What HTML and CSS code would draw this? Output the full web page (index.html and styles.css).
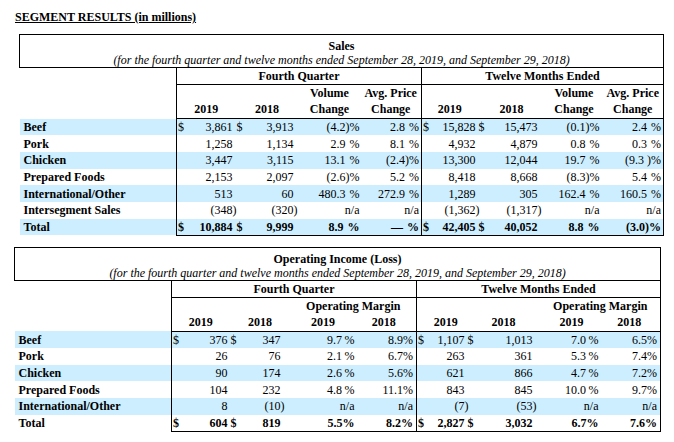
FILE: index.html
```
<!DOCTYPE html>
<html>
<head>
<meta charset="utf-8">
<link rel="stylesheet" href="styles.css">
</head>
<body>
<div class="page">
  <p class="heading">SEGMENT RESULTS (in millions)</p>

  <table class="seg sales">
    <colgroup>
      <col class="c-lab"><col class="c-d"><col class="c-a"><col class="c-d"><col class="c-b"><col class="c-c"><col class="c-e">
      <col class="c-d"><col class="c-f"><col class="c-d"><col class="c-g"><col class="c-h"><col class="c-i">
    </colgroup>
    <tr class="ttl">
      <td colspan="13"><div class="t">Sales</div><div class="sub">(for the fourth quarter and twelve months ended September 28, 2019, and September 29, 2018)</div></td>
    </tr>
    <tr class="grp">
      <td></td>
      <td colspan="6" class="fq">Fourth Quarter</td>
      <td colspan="6" class="tm">Twelve Months Ended</td>
    </tr>
    <tr class="hd">
      <td></td>
      <td colspan="2" class="fq">2019</td>
      <td colspan="2">2018</td>
      <td>Volume<br>Change</td>
      <td>Avg. Price<br>Change</td>
      <td colspan="2" class="tm">2019</td>
      <td colspan="2">2018</td>
      <td>Volume<br>Change</td>
      <td class="last">Avg. Price<br>Change</td>
    </tr>
    <tr class="d sh">
      <td>Beef</td><td>$</td><td>3,861</td><td>$</td><td>3,913</td><td>(4.2)%</td><td>2.8<i class="gp"></i>%</td>
      <td>$</td><td>15,828</td><td>$</td><td>15,473</td><td>(0.1)%</td><td>2.4<i class="gp"></i>%</td>
    </tr>
    <tr class="d">
      <td>Pork</td><td></td><td>1,258</td><td></td><td>1,134</td><td>2.9<i class="gp"></i>%</td><td>8.1<i class="gp"></i>%</td>
      <td></td><td>4,932</td><td></td><td>4,879</td><td>0.8<i class="gp"></i>%</td><td>0.3<i class="gp"></i>%</td>
    </tr>
    <tr class="d sh">
      <td>Chicken</td><td></td><td>3,447</td><td></td><td>3,115</td><td>13.1<i class="gp"></i>%</td><td>(2.4)%</td>
      <td></td><td>13,300</td><td></td><td>12,044</td><td>19.7<i class="gp"></i>%</td><td>(9.3 )%</td>
    </tr>
    <tr class="d">
      <td>Prepared Foods</td><td></td><td>2,153</td><td></td><td>2,097</td><td>(2.6)%</td><td>5.2<i class="gp"></i>%</td>
      <td></td><td>8,418</td><td></td><td>8,668</td><td>(8.3)%</td><td>5.4<i class="gp"></i>%</td>
    </tr>
    <tr class="d sh">
      <td>International/Other</td><td></td><td>513</td><td></td><td>60</td><td>480.3<i class="gp"></i>%</td><td>272.9<i class="gp"></i>%</td>
      <td></td><td>1,289</td><td></td><td>305</td><td>162.4<i class="gp"></i>%</td><td>160.5<i class="gp"></i>%</td>
    </tr>
    <tr class="d">
      <td>Intersegment Sales</td><td></td><td>(348<span class="rp">)</span></td><td></td><td>(320<span class="rp">)</span></td><td>n/a</td><td>n/a</td>
      <td></td><td>(1,362<span class="rp">)</span></td><td></td><td>(1,317<span class="rp">)</span></td><td>n/a</td><td>n/a</td>
    </tr>
    <tr class="d sh tot">
      <td>Total</td><td>$</td><td>10,884</td><td>$</td><td>9,999</td><td>8.9<i class="gp"></i>%</td><td>—<i class="gp"></i>%</td>
      <td>$</td><td>42,405</td><td>$</td><td>40,052</td><td>8.8<i class="gp"></i>%</td><td>(3.0)%</td>
    </tr>
  </table>

  <table class="seg opinc">
    <colgroup>
      <col class="c-lab"><col class="c-d"><col class="c-a"><col class="c-d"><col class="c-b"><col class="c-c"><col class="c-e">
      <col class="c-d"><col class="c-f"><col class="c-d"><col class="c-g"><col class="c-h"><col class="c-i">
    </colgroup>
    <tr class="ttl">
      <td colspan="13"><div class="t">Operating Income (Loss)</div><div class="sub">(for the fourth quarter and twelve months ended September 28, 2019, and September 29, 2018)</div></td>
    </tr>
    <tr class="grp">
      <td></td>
      <td colspan="6" class="fq">Fourth Quarter</td>
      <td colspan="6" class="tm">Twelve Months Ended</td>
    </tr>
    <tr class="hd">
      <td></td>
      <td colspan="2" class="fq">&nbsp;<br>2019</td>
      <td colspan="2">&nbsp;<br>2018</td>
      <td colspan="2" class="om">Operating Margin<div class="yrs"><span>2019</span><span>2018</span></div></td>
      <td colspan="2" class="tm y9">&nbsp;<br>2019</td>
      <td colspan="2">&nbsp;<br>2018</td>
      <td colspan="2" class="om last">Operating Margin<div class="yrs"><span>2019</span><span>2018</span></div></td>
    </tr>
    <tr class="d sh">
      <td>Beef</td><td>$</td><td>376</td><td>$</td><td>347</td><td>9.7&#8201;%</td><td>8.9%</td>
      <td>$</td><td>1,107</td><td>$</td><td>1,013</td><td>7.0&#8201;%</td><td>6.5%</td>
    </tr>
    <tr class="d">
      <td>Pork</td><td></td><td>26</td><td></td><td>76</td><td>2.1&#8201;%</td><td>6.7%</td>
      <td></td><td>263</td><td></td><td>361</td><td>5.3&#8201;%</td><td>7.4%</td>
    </tr>
    <tr class="d sh">
      <td>Chicken</td><td></td><td>90</td><td></td><td>174</td><td>2.6&#8201;%</td><td>5.6%</td>
      <td></td><td>621</td><td></td><td>866</td><td>4.7&#8201;%</td><td>7.2%</td>
    </tr>
    <tr class="d">
      <td>Prepared Foods</td><td></td><td>104</td><td></td><td>232</td><td>4.8&#8201;%</td><td>11.1%</td>
      <td></td><td>843</td><td></td><td>845</td><td>10.0&#8201;%</td><td>9.7%</td>
    </tr>
    <tr class="d sh">
      <td>International/Other</td><td></td><td>8</td><td></td><td>(10<span class="rp">)</span></td><td>n/a</td><td>n/a</td>
      <td></td><td>(7<span class="rp">)</span></td><td></td><td>(53<span class="rp">)</span></td><td>n/a</td><td>n/a</td>
    </tr>
    <tr class="d tot">
      <td>Total</td><td>$</td><td>604</td><td>$</td><td>819</td><td>5.5%</td><td>8.2%</td>
      <td>$</td><td>2,827</td><td>$</td><td>3,032</td><td>6.7%</td><td>7.6%</td>
    </tr>
  </table>
</div>
</body>
</html>
```
FILE: styles.css
```
* { box-sizing: border-box; }
body {
  margin: 0;
  background: #fff;
  color: #000;
  font-family: "Liberation Serif", "Times New Roman", serif;
  font-size: 12px;
}
.page { padding: 10px 0 0 15px; }
.heading {
  margin: 0;
  font-weight: bold;
  text-decoration: underline;
  line-height: 14px;
}

table.seg {
  border-collapse: collapse;
  table-layout: fixed;
}
.sales { margin: 10px 0 0 4px; width: 645px; }
.opinc { margin: 11px 0 0 -1px; width: 647px; }

.seg td {
  padding: 0;
  white-space: nowrap;
  line-height: 16px;
}

/* columns */
.sales .c-lab { width: 157px; }
.sales .c-d { width: 9px; }
.sales .c-a { width: 50px; }
.sales .c-b { width: 54px; }
.sales .c-c { width: 62px; }
.sales .c-e { width: 61px; }
.sales .c-f { width: 47px; }
.sales .c-g { width: 59px; }
.sales .c-h { width: 57px; }
.sales .c-i { width: 61px; }

.opinc .c-lab { width: 157px; }
.opinc .c-d { width: 9px; }
.opinc .c-a { width: 49px; }
.opinc .c-b { width: 52px; }
.opinc .c-c { width: 68px; }
.opinc .c-e { width: 58px; }
.opinc .c-f { width: 41px; }
.opinc .c-g { width: 65px; }
.opinc .c-h { width: 62px; }
.opinc .c-i { width: 58px; }

/* title box */
.ttl td {
  border: 1px solid #000;
  text-align: center;
  padding: 4px 0 0;
  line-height: 14px;
}
.ttl .t { font-weight: bold; }
.ttl .sub { font-style: italic; }

/* group row */
.grp td {
  height: 17px;
  font-weight: bold;
  text-align: center;
}
.grp .fq { border-left: 1px solid #000; border-bottom: 1px solid #000; }
.grp .tm { border-left: 1px solid #000; border-right: 1px solid #000; border-bottom: 1px solid #000; }

/* header row */
.hd td {
  font-weight: bold;
  text-align: center;
  vertical-align: bottom;
  height: 34px;
  padding-bottom: 1px;
}
.hd td + td { border-bottom: 1px solid #000; }
.hd .fq, .hd .tm { border-left: 1px solid #000; }
.hd .last { border-right: 1px solid #000; }
.hd .y9 { padding-left: 8px; }
.hd .om { line-height: 16px; }
.yrs { display: flex; }
.yrs span { flex: 1; text-align: center; }
.opinc .hd .om .yrs span:first-child { padding-left: 2px; }
.opinc .hd .om .yrs span:last-child { padding-right: 2px; }

/* data rows */
.d td {
  height: 16.7px;
  line-height: 15px;
  text-align: right;
  vertical-align: middle;
  padding-top: 1px;
}
.d td:first-child { text-align: left; padding-left: 4px; font-weight: bold; }
.d td:nth-child(2), .d td:nth-child(4), .d td:nth-child(8), .d td:nth-child(10) {
  text-align: left;
  padding-left: 1px;
}
.d td:nth-child(2), .d td:nth-child(8) { border-left: 1px solid #000; }
.d td:nth-child(13) { border-right: 1px solid #000; }
.d.tot td { font-weight: bold; }
.d.tot td + td { border-bottom: 1px solid #000; }
.sh td { background: #cceeff; }

.sales .d td:nth-child(3) { padding-right: 3px; }
.sales .d td:nth-child(5) { padding-right: 5px; }
.sales .d td:nth-child(6) { padding-right: 1px; }
.sales .d td:nth-child(7) { padding-right: 2px; }
.sales .d td:nth-child(9) { padding-right: 2px; }
.sales .d td:nth-child(11) { padding-right: 8px; }
.sales .d td:nth-child(12) { padding-right: 3px; }
.sales .d td:nth-child(13) { padding-right: 2px; }

.opinc .d td:nth-child(3) { padding-right: 2px; }
.opinc .d td:nth-child(5) { padding-right: 10px; }
.opinc .d td:nth-child(6) { padding-right: 4px; }
.opinc .d td:nth-child(7) { padding-right: 3px; }
.opinc .d td:nth-child(9) { padding-right: 2px; }
.opinc .d td:nth-child(11) { padding-right: 8px; }
.opinc .d td:nth-child(12) { padding-right: 4px; }
.opinc .d td:nth-child(13) { padding-right: 3px; }

.gp { display: inline-block; width: 4px; }
.rp { margin-right: -4px; }
```
